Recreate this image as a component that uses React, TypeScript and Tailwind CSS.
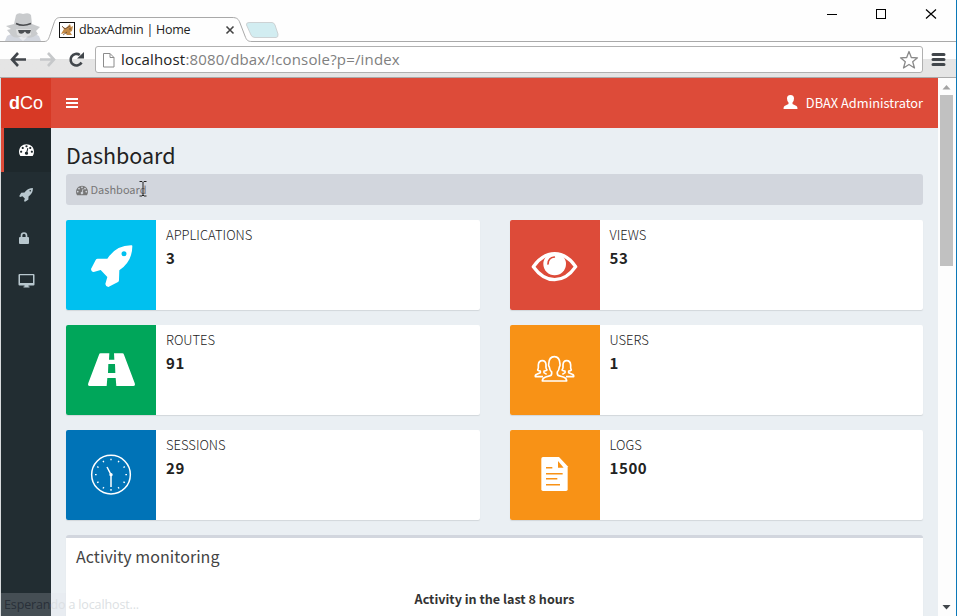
import React from "react";

const sans = "font-['Noto_Sans_CJK_SC','Noto_Sans',sans-serif]";
const ui = "font-['Open_Sans','Noto_Sans',sans-serif]";

const GAUGE =
  "M384 1152q0-53-37.5-90.5t-90.5-37.5-90.5 37.5-37.5 90.5 37.5 90.5 90.5 37.5 90.5-37.5 37.5-90.5zm192-448q0-53-37.5-90.5t-90.5-37.5-90.5 37.5-37.5 90.5 37.5 90.5 90.5 37.5 90.5-37.5 37.5-90.5zm428 481l101-382q6-26-7.5-48.5t-38.5-29.5-48 6.5-30 39.5l-101 382q-60 5-107 43.5t-63 98.5q-20 77 20 146t117 89 146-20 89-117q16-60-6-117t-72-91zm660-33q0-53-37.5-90.5t-90.5-37.5-90.5 37.5-37.5 90.5 37.5 90.5 90.5 37.5 90.5-37.5 37.5-90.5zm-640-640q0-53-37.5-90.5t-90.5-37.5-90.5 37.5-37.5 90.5 37.5 90.5 90.5 37.5 90.5-37.5 37.5-90.5zm448 192q0-53-37.5-90.5t-90.5-37.5-90.5 37.5-37.5 90.5 37.5 90.5 90.5 37.5 90.5-37.5 37.5-90.5zm320 448q0 261-141 483-19 29-54 29h-1402q-35 0-54-29-141-221-141-483 0-182 71-348t191-286 286-191 348-71 348 71 286 191 191 286 71 348z";
const ROCKET =
  "M1440 448q0-40-28-68t-68-28-68 28-28 68 28 68 68 28 68-28 28-68zm224-288q0 249-75.5 430.5t-253.5 360.5q-81 80-195 176l-20 379q-2 16-16 26l-384 224q-7 4-16 4-12 0-23-9l-64-64q-13-14-8-32l85-276-281-281-276 85q-3 1-9 1-14 0-23-9l-64-64q-17-19-5-39l224-384q10-14 26-16l379-20q96-114 176-195 188-187 358-258t431-71q14 0 24 9.5t10 22.5z";

function Glyph({ d, className }: { d: string; className: string }) {
  return (
    <svg viewBox="0 0 1792 1792" className={className} fill="currentColor">
      <path d={d} />
    </svg>
  );
}

function TabStrip() {
  return (
    <div className="relative h-[42px] shrink-0 bg-[#fefefe]">
      <svg width="957" height="42" className="block" fill="none">
        <path d="M0 41.5H44C48 41.5 48.500 39 50 35L54 23C55.500 18.500 57 17.500 61 17.500H232C237 17.500 238.500 19 240 23L245 36C246.500 40 247.500 41.500 252 41.500H957" stroke="#a9a9a9" />
        {/* incognito figure */}
        <path d="M5 41L7 36L15 32L31 32L39 36L41 41Z" fill="#d3d7df" />
        <path d="M13 33L23 41L32 33L28 27H18Z" fill="#e9ebee" />
        <path d="M14 24L16 15Q18 12 23 14Q29 12 31 15L32 24L40 27L36 31L38 34L33 37Q28 39 23 36Q16 39 12 36L7 30L11 29L6 26Z" fill="#c9cbcd" />
        <path d="M16 29H31V35L24 38L17 35Z" fill="#dedfe0" />
        <path d="M16 23.500Q23 27 31 23.500" stroke="#4a4c4f" strokeWidth="1.600" />
        <path d="M18 30H31L30 33Q27 35 25 31.500Q22 35 19 33Z" fill="#4d5053" />
        {/* tab favicon */}
        <rect x="59.500" y="22.500" width="15" height="15" fill="#fff" stroke="#111" />
        <path d="M61 34L64 29L62 27L66 28L70 24L71 27L73 26L72 31L70 32L72 35H67L65 33Z" fill="#c38a47" />
        <path d="M62 26L65 29L70 26M63 35L67 32M70 28V30" stroke="#5d4637" strokeWidth=".8" />
        <path d="M226.500 26.500L233.500 33.500M233.500 26.500L226.500 33.500" stroke="#444" strokeWidth="1.600" />
        <path d="M249 22.500H272Q274 22.500 275 25L278 34Q278.500 37.500 276 37.500H255Q252 37.500 251 35L246.500 25Q246 22.500 249 22.500Z" fill="#d2edf1" stroke="#c5c9ca" strokeWidth=".8" />
        <path d="M827 14.500H837" stroke="#000" />
        <rect x="876.500" y="9.500" width="9" height="9" stroke="#000" />
        <path d="M926 9.500L936 18.500M936 9.500L926 18.500" stroke="#000" strokeWidth="1.200" />
      </svg>
      <span className={`absolute left-[79px] top-[20px] text-[12.5px] leading-[20px] tracking-[-0.26px] text-[#222] ${ui}`}>
        dbaxAdmin | Home
      </span>
    </div>
  );
}

function Toolbar() {
  return (
    <div className="flex h-[36px] shrink-0 items-start border-b border-[#aaa] bg-linear-to-b from-[#fefefe] from-48% to-[#e5e5e5] to-48%">
      <svg width="95" height="35" className="shrink-0" fill="none" strokeWidth="2.600">
        <path d="M26 17.500H12M18 11L12 17.500L18 24" stroke="#41464b" />
        <path d="M40 17.500H54M48 11L54 17.500L48 24" stroke="#c6c8ca" />
        <path d="M81.500 20.500A5.800 5.800 0 1 1 79.800 13" stroke="#41464b" />
        <path d="M84 10V16.500H77Z" fill="#41464b" />
      </svg>
      <div className="mt-1 flex h-[27px] w-[828px] items-center rounded-[3px] border border-[#b0b0b0] bg-white pl-[7px] pr-[3px]">
        <svg width="12" height="16" fill="none" stroke="#8c8c8c" className="shrink-0">
          <path d="M.500 1.500H7L11 5.500V15H.500ZM7 1.500V5.500H11" />
        </svg>
        <span className={`mb-[2px] ml-[6px] flex-1 text-[15px] leading-[20px] tracking-[0.17px] text-[#808080] ${ui}`}>
          <span className="text-[#222]">localhost</span>:8080/dbax/!console?p=/index
        </span>
        <svg width="20" height="20" viewBox="0 0 20 20" fill="none" stroke="#8a8a8a" strokeWidth="1.300" strokeLinejoin="round">
          <path d="M10 1.500L12.300 7.500L18.500 7.800L13.700 11.700L15.500 18L10 14.500L4.500 18L6.300 11.700L1.500 7.800L7.700 7.500Z" />
        </svg>
      </div>
      <svg width="30" height="34" className="shrink-0">
        <path d="M10 12.500H21M10 17.500H21M10 22.500H21" stroke="#41464b" strokeWidth="3" strokeLinecap="round" />
      </svg>
    </div>
  );
}

function Sidebar() {
  return (
    <aside className="flex w-[50px] shrink-0 flex-col bg-[#222d32] text-[#b8c7ce]">
      <div className="flex h-[50px] items-center justify-center bg-[#d73925] font-['Liberation_Sans',Arial,sans-serif] text-[18px] text-white">
        <b>d</b>Co
      </div>
      <div className="flex h-[44px] items-center border-l-[3px] border-[#dd4b39] bg-[#1e282c] pb-[1px] pl-[15px] text-white">
        <Glyph d={GAUGE} className="size-[15px]" />
      </div>
      <div className="flex h-[44px] items-center pl-[18px]">
        <Glyph d={ROCKET} className="size-[15px]" />
      </div>
      <div className="flex h-[43px] items-center pl-[18px]">
        <svg width="10" height="12" fill="none">
          <path d="M2.500 6V3.500Q2.500 1 5 1T7.500 3.500V6" stroke="currentColor" strokeWidth="1.700" />
          <rect y="5" width="10" height="7" rx="1" fill="currentColor" />
        </svg>
      </div>
      <div className="flex h-[44px] items-center pl-[17px]">
        <svg width="17" height="14">
          <path fillRule="evenodd" fill="currentColor" d="M1.500 0H15.500Q16.500 0 16.500 1V10.500Q16.500 11.500 15.500 11.500H10.500V12.500H11.500V13.500H5.500V12.500H6.500V11.500H1.500Q.500 11.500 .500 10.500V1Q.500 0 1.500 0ZM2 1.300V9H15V1.300Z" />
        </svg>
      </div>
    </aside>
  );
}

function RocketIcon() {
  return (
    <path fillRule="evenodd" fill="#fff" d="M197 76Q151 75 124 116L95 116Q91 116 89 120L75 147Q76 156 83 156L104 150L124 171L118 192Q119 200 127 201L156 186Q159 184 159 180L160 151Q199 124 199 79Q199 76 197 76ZM174 94A7.500 7.500 0 1 1 174 109A7.500 7.500 0 1 1 174 94Z" />
  );
}

function RoadIcon() {
  return (
    <path fillRule="evenodd" fill="#fff" d="M104 85H169Q173 85 174 89L206 174Q209 183 202 183H71Q64 183 67 174L99 89Q100 85 104 85ZM130 85L129 104H145L144 85ZM127 117L126 144H148L147 117ZM124 159L122 183H151L149 159Z" />
  );
}

function ClockIcon() {
  const ticks = Array.from({ length: 12 }, (_, i) => i * 30);
  return (
    <g stroke="#fff" fill="none">
      <circle cx="135" cy="134" r="58" strokeWidth="4.500" />
      {ticks.map((a) => (
        <path key={a} d="M135 86V91" strokeWidth="4" transform={`rotate(${a} 135 134)`} />
      ))}
      <path d="M135 171V134L123 111" strokeWidth="4.500" />
      <circle cx="135" cy="134" r="5" fill="#fff" stroke="none" />
    </g>
  );
}

function EyeIcon() {
  return (
    <g fill="none" stroke="#fff">
      <path d="M70 140Q98 101 134 101T197 140Q170 179 134 179T70 140Z" strokeWidth="10" strokeLinejoin="round" />
      <circle cx="134" cy="132" r="34" fill="#fff" stroke="none" />
      <path d="M114 132Q115 112 133 111" stroke="#dd4b39" strokeWidth="5" strokeLinecap="round" />
    </g>
  );
}

function PeopleIcon() {
  return (
    <g fill="none" stroke="#fff" strokeWidth="5" strokeLinejoin="round">
      <path d="M97 168Q97 159 107 156L121 152Q126 150 125 141Q119 136 118 126Q115 124 116 117Q117 95 133 95T150 117Q151 124 148 126Q147 136 142 141Q141 150 146 152L160 156Q170 159 170 168Z" />
      <path d="M99 155H76Q75 149 82 147L91 143V138Q85 138 83 135Q86 131 85 120Q86 107 97 107Q107 107 108 119Q107 131 111 135Q108 138 102 138V143L110 148" />
      <path d="M168 155H191Q192 149 185 147L176 143V138Q182 138 184 135Q181 131 182 120Q181 107 170 107Q160 107 159 119Q160 131 156 135Q159 138 165 138V143L157 148" />
    </g>
  );
}

function DocumentIcon() {
  return (
    <g>
      <path fill="#fff" d="M99 81H147L173 109V178Q173 183 168 183H99Q94 183 94 178V86Q94 81 99 81Z" />
      <path d="M144 93V113H161Z" fill="#f89216" />
      <path d="M108 113H127M108 131H158M108 146H142M108 164H150" stroke="#f89216" strokeWidth="4.500" />
    </g>
  );
}

const cards = [
  { label: "APPLICATIONS", value: "3", bg: "bg-[#00c0ef]", Icon: RocketIcon },
  { label: "VIEWS", value: "53", bg: "bg-[#dd4b39]", Icon: EyeIcon },
  { label: "ROUTES", value: "91", bg: "bg-[#00a65a]", Icon: RoadIcon },
  { label: "USERS", value: "1", bg: "bg-[#f89216]", Icon: PeopleIcon },
  { label: "SESSIONS", value: "29", bg: "bg-[#0073b7]", Icon: ClockIcon },
  { label: "LOGS", value: "1500", bg: "bg-[#f89216]", Icon: DocumentIcon },
];

function Header() {
  return (
    <header className="flex h-[50px] shrink-0 items-center bg-[#dd4b39] pl-[15px] pr-[15px] text-white">
      <svg width="12" height="10">
        <path d="M0 1H12M0 5H12M0 9H12" stroke="#fff" strokeWidth="2" />
      </svg>
      <svg width="15" height="14" viewBox="0 0 15 14" className="mb-[2px] ml-auto" fill="#fff">
        <path d="M7.500 0C10 0 11 1.500 11 3.500Q11 6 9.500 7.500V9L13.500 11Q14.500 11.500 14.500 14H.500Q.500 11.500 1.500 11L5.500 9V7.500Q4 6 4 3.500C4 1.500 5 0 7.500 0Z" />
      </svg>
      <span className="ml-[8px] text-[12.8px] leading-[20px]">DBAX Administrator</span>
    </header>
  );
}

function Content() {
  return (
    <main className="flex min-h-0 flex-1 flex-col overflow-hidden px-[15px] text-[#333]">
      <h1 className="mt-[14px] h-[32px] shrink-0 text-[21.5px] leading-[26px] text-[#222]">Dashboard</h1>
      <div className="relative flex h-[31px] shrink-0 items-center rounded-[3px] bg-[#d2d6dd] pl-[10px] text-[#777]">
        <Glyph d={GAUGE} className="size-[12px]" />
        <span className="mb-[2px] ml-[2.5px] text-[11px] leading-[20px]">Dashboard</span>
        <svg width="8" height="16" className="absolute left-[73px] top-[7px]" fill="none" stroke="#222">
          <path d="M.500 .500H3L4 1.500L5 .500H7.500M4 1.500V14M.500 15H3L4 14L5 15H7.500" />
        </svg>
      </div>
      <div className="mt-[15px] grid shrink-0 grid-cols-2 gap-x-[30px] gap-y-[15px]">
        {cards.map(({ label, value, bg, Icon }) => (
          <section key={label} className="flex h-[90px] overflow-hidden rounded-[2px] bg-white shadow-[0_1px_1px_rgba(0,0,0,0.1)]">
            <div className={`size-[90px] shrink-0 ${bg}`}>
              <svg viewBox="0 0 270 270" className="size-[90px]">
                <Icon />
              </svg>
            </div>
            <div className="flex flex-col px-[10px] pt-[5px]">
              <span className="text-[13px] font-light leading-[20px] text-[#222]">{label}</span>
              <b className="text-[15px] leading-[25px] tracking-[0.6px] text-[#222]">{value}</b>
            </div>
          </section>
        ))}
      </div>
      <section className="mt-[15px] flex h-[120px] shrink-0 flex-col rounded-[3px] border-t-[3px] border-[#d2d6de] bg-white shadow-[0_1px_1px_rgba(0,0,0,0.1)]">
        <h2 className="px-[10px] pt-[7px] text-[16px] leading-[22px] tracking-[0.06px] text-[#444]">Activity monitoring</h2>
        <p className="mt-[22px] text-center text-[12.6px] font-bold leading-[20px]">Activity in the last 8 hours</p>
      </section>
    </main>
  );
}

function Scrollbar() {
  return (
    <div className="flex w-[17px] shrink-0 flex-col items-center justify-between bg-[#fdfdfd]">
      <div className="flex flex-col items-center">
        <svg width="17" height="17">
          <path d="M4.500 11.500L8.500 7L12.500 11.500Z" fill="#a3a3a3" />
        </svg>
        <div className="h-[171px] w-[13px] bg-[#c1c1c1]" />
      </div>
      <svg width="17" height="17">
        <path d="M4.500 6L8.500 10.500L12.500 6Z" fill="#41464b" />
      </svg>
    </div>
  );
}

export default function App() {
  return (
    <div className="relative flex h-[616px] w-[957px] flex-col overflow-hidden bg-white">
      <TabStrip />
      <Toolbar />
      <div className={`flex min-h-0 flex-1 border-l border-[#d9dcde] ${sans}`}>
        <Sidebar />
        <div className="flex min-w-0 flex-1 flex-col bg-[#eaeff3]">
          <Header />
          <Content />
        </div>
        <Scrollbar />
        <div className="w-[2px] shrink-0 bg-[#fdfdfd]" />
      </div>
      <div className={`absolute bottom-0 left-[1px] h-[23px] w-[65px] whitespace-nowrap bg-[rgba(225,225,232,0.19)] pl-[3px] text-[12.5px] leading-[23px] tracking-[-0.13px] ${ui}`}>
        <span className="text-[#293039]">Esperan</span>
        <span className="text-[#dcdfe3]">do a localhost...</span>
      </div>
      <div className="absolute inset-y-0 right-0 w-[1px] bg-[#0b78b8]" />
    </div>
  );
}
